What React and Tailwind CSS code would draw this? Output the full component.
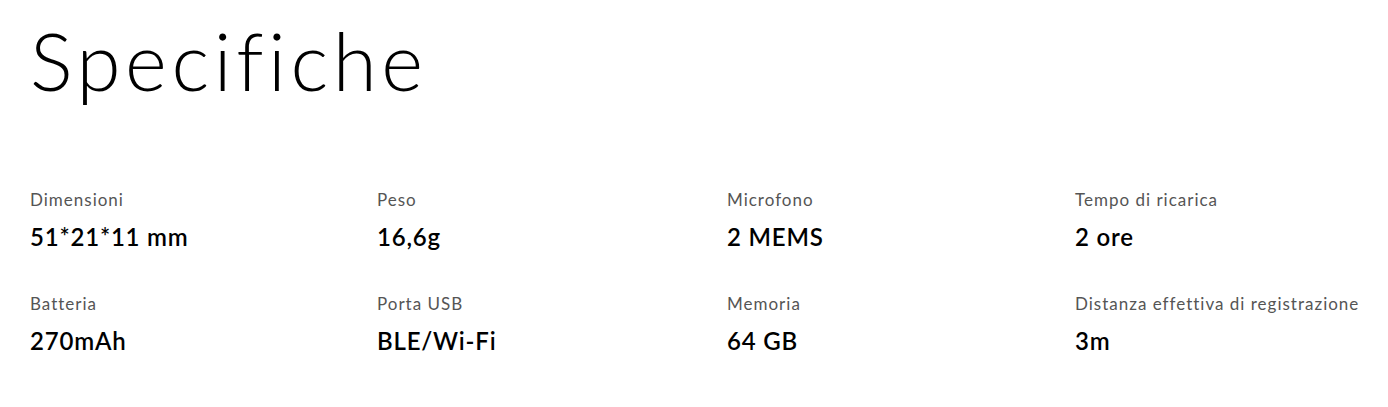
export default function App() {
  const items = [
    ["Dimensioni", "51*21*11 mm"],
    ["Peso", "16,6g"],
    ["Microfono", "2 MEMS"],
    ["Tempo di ricarica", "2 ore"],
    ["Batteria", "270mAh"],
    ["Porta USB", "BLE/Wi-Fi"],
    ["Memoria", "64 GB"],
    ["Distanza effettiva di registrazione", "3m"],
  ];
  return (
    <div className="w-[1388px] h-[407px] bg-white overflow-hidden pl-[30px] font-['Lato',sans-serif]">
      <h1 className="text-[80px] leading-none font-light text-black pt-[20px] tracking-[4.6px]">Specifiche</h1>
      <div className="grid grid-cols-[347px_350px_348px_1fr] mt-[90px] gap-y-[43px]">
        {items.map(([l, v]) => (
          <div key={l} className="flex flex-col">
            <div className="text-[17px] leading-[20px] text-[#555] tracking-[1px]">{l}</div>
            <div className="text-[24px] leading-[28px] font-semibold text-black mt-[13px] tracking-[0.8px]">{v}</div>
          </div>
        ))}
      </div>
    </div>
  );
}
